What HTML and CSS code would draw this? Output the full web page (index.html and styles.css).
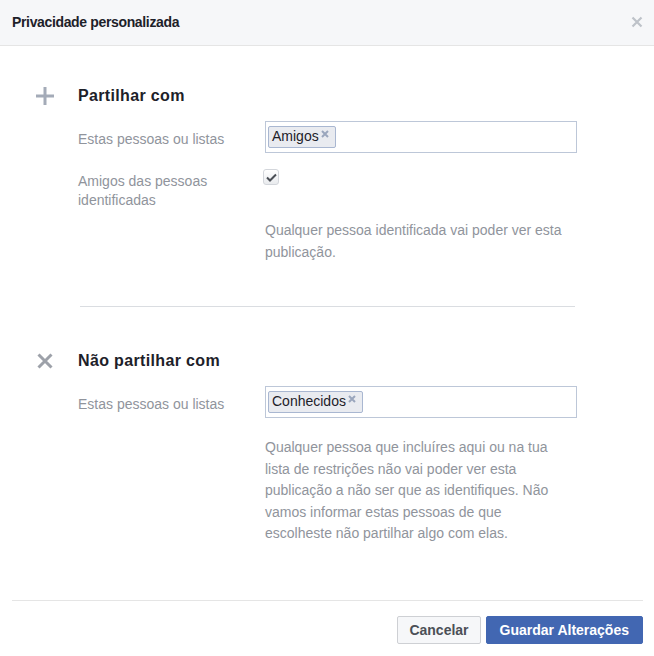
FILE: index.html
```html
<!DOCTYPE html>
<html lang="pt">
<head>
<meta charset="utf-8">
<title>Privacidade personalizada</title>
<link rel="stylesheet" href="styles.css">
</head>
<body>
<div class="dialog">
  <header class="dlg-header">
    <h1 class="dlg-title">Privacidade personalizada</h1>
    <button class="dlg-close" aria-label="Fechar">
      <svg width="12" height="12" viewBox="0 0 12 12"><path d="M1.5 1.5l9 9M10.5 1.5l-9 9" stroke="#bec2c9" stroke-width="2.2" fill="none"/></svg>
    </button>
  </header>

  <div class="dlg-body">
    <section class="share">
      <div class="share-icon">
        <svg class="icon-plus" width="18" height="20" viewBox="0 0 18 20"><path d="M9 1v18M0 10h18" stroke="#a4abb8" stroke-width="3" fill="none"/></svg>
      </div>
      <div class="share-main">
        <h2 class="share-title">Partilhar com</h2>
        <div class="field">
          <div class="field-label">Estas pessoas ou listas</div>
          <div class="token-input">
            <span class="token">Amigos<svg class="token-x" width="8" height="8" viewBox="0 0 8 8"><path d="M1 1l6 6M7 1L1 7" stroke="#9aa6bd" stroke-width="2" fill="none"/></svg></span>
          </div>
        </div>
        <div class="field field--check">
          <div class="field-label">Amigos das pessoas identificadas</div>
          <div class="check-cell">
            <span class="checkbox"><svg width="11" height="9" viewBox="0 0 11 9"><path d="M1 4.5l3 3L10 1.5" stroke="#4b4f56" stroke-width="2" fill="none"/></svg></span>
          </div>
        </div>
        <p class="hint hint--first">Qualquer pessoa identificada vai poder ver esta publicação.</p>
      </div>
    </section>

    <hr class="divider">

    <section class="share">
      <div class="share-icon">
        <svg width="16" height="20" viewBox="0 0 16 20"><path d="M1.5 3.5l13 13M14.5 3.5l-13 13" stroke="#9da1a9" stroke-width="3" fill="none"/></svg>
      </div>
      <div class="share-main">
        <h2 class="share-title">Não partilhar com</h2>
        <div class="field">
          <div class="field-label">Estas pessoas ou listas</div>
          <div class="token-input">
            <span class="token">Conhecidos<svg class="token-x" width="8" height="8" viewBox="0 0 8 8"><path d="M1 1l6 6M7 1L1 7" stroke="#9aa6bd" stroke-width="2" fill="none"/></svg></span>
          </div>
        </div>
        <p class="hint hint--second">Qualquer pessoa que incluíres aqui ou na tua lista de restrições não vai poder ver esta publicação a não ser que as identifiques. Não vamos informar estas pessoas de que escolheste não partilhar algo com elas.</p>
      </div>
    </section>
  </div>

  <footer class="dlg-footer">
    <button class="btn btn--secondary">Cancelar</button>
    <button class="btn btn--primary">Guardar Alterações</button>
  </footer>
</div>
</body>
</html>
```

FILE: styles.css
```css
* { box-sizing: border-box; }

html, body {
  margin: 0;
  padding: 0;
  background: #ffffff;
}

body {
  font-family: "Liberation Sans", Arial, Helvetica, sans-serif;
  font-size: 14px;
  color: #1d2129;
}

.dialog {
  width: 654px;
  height: 656px;
  background: #fff;
}

.dlg-header {
  height: 46px;
  background: #f6f7f9;
  border-bottom: 1px solid #e5e5e5;
  display: flex;
  align-items: center;
  justify-content: space-between;
  padding: 0 11px 1px 12px;
}

.dlg-title {
  margin: 0;
  font-size: 14px;
  font-weight: bold;
  line-height: 18px;
  letter-spacing: -0.35px;
  color: #1d2129;
}

.dlg-close {
  border: 0;
  background: transparent;
  padding: 0;
  width: 12px;
  height: 12px;
  display: flex;
}

.dlg-body {
  padding-top: 40px;
}

.share {
  display: flex;
  padding-left: 37px;
}

.share-icon {
  width: 16px;
  height: 20px;
  margin-right: 25px;
  display: flex;
  justify-content: center;
  flex: none;
}

.icon-plus { margin: 0 -1px; }

.share-main {
  flex: none;
  width: 499px;
}

.share-title {
  margin: 0;
  font-size: 16px;
  font-weight: bold;
  line-height: 20px;
  letter-spacing: 0.35px;
  color: #1d2129;
}

.field {
  display: grid;
  grid-template-columns: 187px 312px;
  margin-top: 15px;
}

.field--check {
  margin-top: 10px;
}

.field-label {
  color: #90949c;
  line-height: 19px;
  padding: 9px 12px 0 0;
}

.token-input {
  height: 32px;
  border: 1px solid #bdc7d8;
  background: #fff;
  padding: 4px 2px;
  display: flex;
  align-items: flex-start;
}

.token {
  height: 22px;
  display: inline-flex;
  align-items: center;
  padding: 0 6px 2px 3px;
  border: 1px solid #a9b7d1;
  border-radius: 2px;
  background: #e9ebf0;
  color: #1d2129;
  font-size: 14px;
  line-height: 18px;
}

.token-x {
  margin-left: 2px;
  margin-top: -5px;
}

.check-cell {
  padding-top: 6px;
}

.checkbox {
  width: 16px;
  height: 16px;
  margin-left: -2px;
  display: flex;
  align-items: center;
  justify-content: center;
  border: 1px solid #d3d6db;
  border-radius: 3px;
  background: linear-gradient(#ffffff, #e9ebee);
}

.hint {
  margin: 0 0 0 187px;
  max-width: 306px;
  color: #90949c;
  line-height: 21.5px;
}

.hint--first { margin-top: 10px; }

.hint--second { margin-top: 19px; }

.divider {
  border: 0;
  height: 1px;
  background: #dadde1;
  margin: 43px 79px 44px 80px;
}

.dlg-footer {
  margin: 55px 11px 0 12px;
  border-top: 1px solid #e5e5e5;
  padding-top: 15px;
  display: flex;
  justify-content: flex-end;
  gap: 5px;
}

.btn {
  height: 28px;
  padding: 0 11px;
  border-radius: 2px;
  font-family: "Liberation Sans", Arial, Helvetica, sans-serif;
  font-size: 14px;
  font-weight: bold;
  line-height: 26px;
}

.btn--secondary {
  background: #f6f7f9;
  border: 1px solid #ced0d4;
  color: #4b4f56;
}

.btn--primary {
  background: #4267b2;
  border: 1px solid #4267b2;
  color: #fff;
  padding: 0 13px;
}
```
